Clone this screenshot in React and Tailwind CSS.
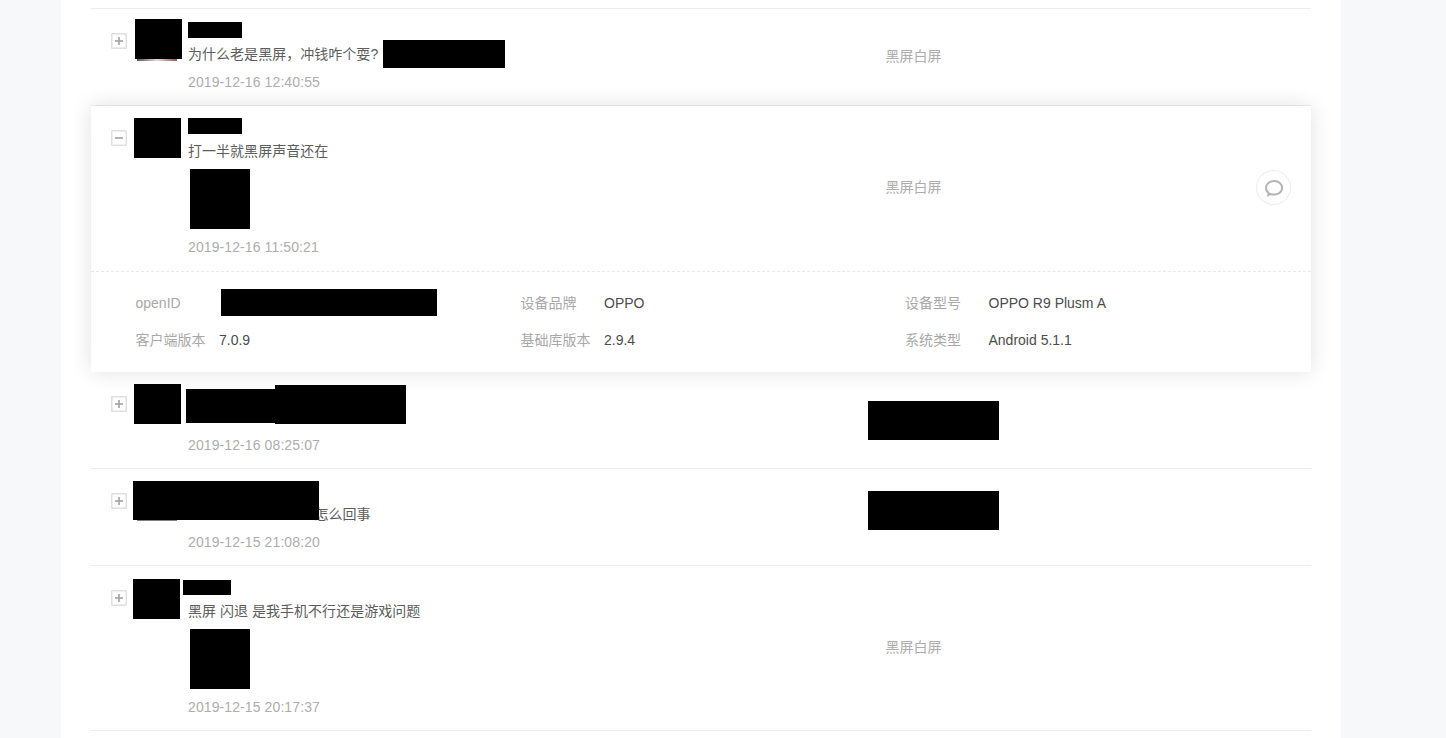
import React from "react";

const Toggle = ({ open }) => (
  <svg className="mt-6 ml-5 w-4 h-4 shrink-0" viewBox="0 0 16 16" fill="none">
    <rect x="0.75" y="0.75" width="14.5" height="14.5" rx="0.5" stroke="#e0e0e0" strokeWidth="1.5" />
    <path d="M4 8H12" stroke="#a6a6a6" strokeWidth="1.7" />
    {!open && <path d="M8 4V12" stroke="#a6a6a6" strokeWidth="1.7" />}
  </svg>
);

const Mask = ({ className }) => <div className={`bg-black shrink-0 ${className}`} />;

const Row = ({ open, avatar, name, text, picture, date, tag, action, children, className }) => (
  <div className={`relative flex ${className}`}>
    <Toggle open={open} />
    <div className="w-[61px] shrink-0">{avatar}</div>
    <div className="w-[697.5px] shrink-0 pt-[10px]">
      <div className="h-[21px]">{name}</div>
      <div className="flex h-7 leading-7 text-[#5c5c5c] whitespace-pre tracking-[0.03px]">{text}</div>
      {picture && <Mask className="w-[60px] h-[60px] mt-1 mb-1 ml-[2px]" />}
      <div className="h-7 leading-7 text-[#adadad] tracking-[0.1px]">{date}</div>
    </div>
    <div className="flex flex-1 items-center text-[#adadad] pb-[2px]">{tag}</div>
    {action}
    {children}
  </div>
);

const ReplyButton = () => (
  <div className="self-center mr-5 mb-[2px] w-[35px] h-[35px] rounded-full border-[1.5px] border-[#ececec] flex items-center justify-center">
    <svg width="20" height="18" viewBox="0 0 20 18" fill="none" stroke="#b3b3b3" strokeWidth="2">
      <path d="M4.7 14C3 12.8 2 11 2 8.9C2 5.1 5.6 2.1 10.1 2.1C14.6 2.1 18.1 5.1 18.1 8.9C18.1 12.7 14.6 15.6 10.1 15.6C8.8 15.6 7.6 15.4 6.5 15L4.4 16.2Z" />
    </svg>
  </div>
);

const Field = ({ label, value }) => (
  <div className="flex h-[37px] leading-[37px]">
    <span className="w-[83.5px] shrink-0 text-[#a8a8a8]">{label}</span>
    <span className="text-[#4c4c4c]">{value}</span>
  </div>
);

const App = () => {
  return (
    <div className="h-[738px] overflow-hidden bg-[#f7f8fa] font-['Liberation_Sans','Noto_Sans_CJK_SC',sans-serif] text-[14px]">
      <div className="w-[1280px] h-full ml-[61px] px-[30px] bg-white">
        <div className="h-[9px] border-b border-[#ececec]" />

        <Row
          className="h-[97px] border-b border-[#f0f0f0]"
          avatar={
            <>
              <Mask className="w-[47px] h-10 mt-[10px] ml-2" />
              <div className="w-10 h-[2px] ml-[10px] bg-linear-to-r from-[#55585f] via-[#e6dcd8] to-[#8a5a58]" />
            </>
          }
          name={<Mask className="w-[54px] h-4 translate-y-[3px]" />}
          text={
            <>
              <span className="w-[195px]">为什么老是黑屏，冲钱咋个耍?</span>
              <Mask className="w-[122px] h-7" />
            </>
          }
          date="2019-12-16 12:40:55"
          tag="黑屏白屏"
        />

        <div className="relative z-10 h-[266px] bg-white shadow-[0_0_20px_rgba(0,0,0,0.12)]">
          <Row
            open
            className="h-[165px]"
            avatar={<Mask className="w-[47px] h-10 mt-3 ml-[7px]" />}
            name={<Mask className="w-[54px] h-4 translate-y-[2px]" />}
            text="打一半就黑屏声音还在"
            picture
            date="2019-12-16 11:50:21"
            tag="黑屏白屏"
            action={<ReplyButton />}
          />
          <div className="grid grid-cols-[385px_384.5px_1fr] pt-[13px] pl-[44.5px] border-t border-dashed border-[#e8e8e8]">
            <Field label="openID" value={<Mask className="w-[216px] h-[27px] mt-1 ml-[2px]" />} />
            <Field label="设备品牌" value="OPPO" />
            <Field label="设备型号" value="OPPO R9 Plusm A" />
            <Field label="客户端版本" value="7.0.9" />
            <Field label="基础库版本" value="2.9.4" />
            <Field label="系统类型" value="Android 5.1.1" />
          </div>
        </div>

        <Row
          className="h-[97px] border-b border-[#ececec]"
          avatar={<Mask className="w-[47px] h-10 mt-3 ml-[7px]" />}
          date="2019-12-16 08:25:07"
          tag={<Mask className="w-[131px] h-[39px] -ml-[18px] mt-[2px]" />}
        >
          <div className="absolute left-[95px] top-[13px] flex items-start">
            <Mask className="w-[89px] h-[34px] mt-1" />
            <Mask className="w-[131px] h-[39px]" />
          </div>
        </Row>

        <Row
          className="h-[97px] border-b border-[#ececec]"
          text={<span className="pl-[126.5px]">怎么回事</span>}
          date="2019-12-15 21:08:20"
          tag={<Mask className="w-[131px] h-[39px] -ml-[17.5px] -mt-[11px]" />}
        >
          <Mask className="absolute left-[42px] top-3 w-[186px] h-[39px]" />
          <Mask className="absolute left-[46px] top-[51px] w-10 h-px opacity-50" />
        </Row>

        <Row
          className="h-[165px] border-b border-[#ececec]"
          avatar={<Mask className="w-[47px] h-10 mt-[13px] ml-[6px]" />}
          name={<Mask className="w-12 h-[15px] -ml-[5px] translate-y-1" />}
          text="黑屏 闪退 是我手机不行还是游戏问题"
          picture
          date="2019-12-15 20:17:37"
          tag="黑屏白屏"
        />
      </div>
    </div>
  );
};

export default App;
